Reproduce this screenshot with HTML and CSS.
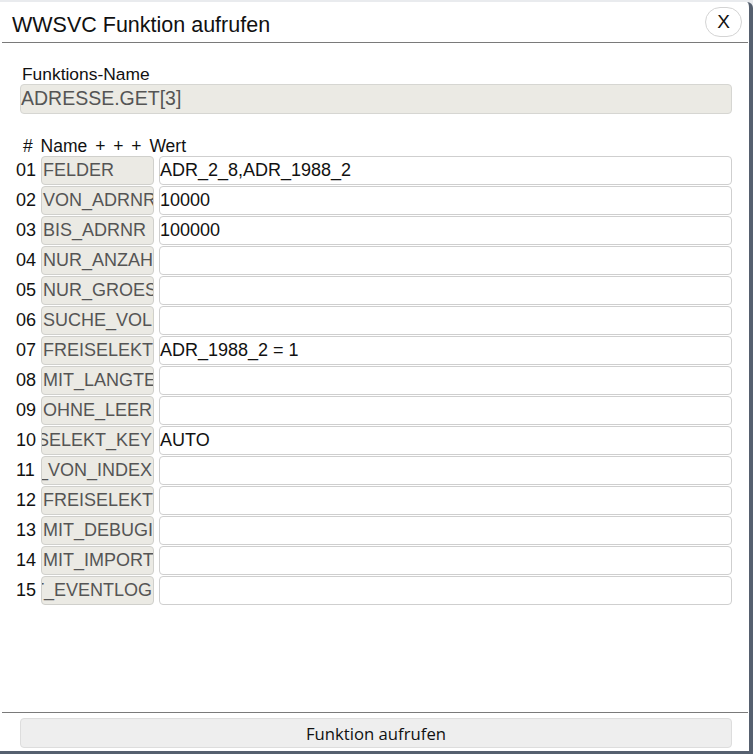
FILE: index.html
```html
<!DOCTYPE html>
<html lang="de">
<head>
<meta charset="utf-8">
<title>WWSVC Funktion aufrufen</title>
<link rel="stylesheet" href="styles.css">
</head>
<body>
<div class="backdrop">
  <div class="dialog">
    <header class="dlg-head">
      <h1 class="dlg-title">WWSVC Funktion aufrufen</h1>
      <button class="close-btn" type="button">X</button>
    </header>
    <main class="dlg-body">
      <label class="fn-label">Funktions-Name</label>
      <div class="fn-input">ADRESSE.GET[3]</div>
      <div class="params-head"># Name + + + Wert</div>
      <div class="params">
        <div class="row"><span class="num">01</span><div class="name"><span>FELDER</span></div><div class="value">ADR_2_8,ADR_1988_2</div></div>
        <div class="row"><span class="num">02</span><div class="name"><span>VON_ADRNR</span></div><div class="value">10000</div></div>
        <div class="row"><span class="num">03</span><div class="name"><span>BIS_ADRNR</span></div><div class="value">100000</div></div>
        <div class="row"><span class="num">04</span><div class="name"><span>NUR_ANZAHL</span></div><div class="value"></div></div>
        <div class="row"><span class="num">05</span><div class="name"><span>NUR_GROESSE</span></div><div class="value"></div></div>
        <div class="row"><span class="num">06</span><div class="name"><span>SUCHE_VOLL</span></div><div class="value"></div></div>
        <div class="row"><span class="num">07</span><div class="name"><span>FREISELEKT</span></div><div class="value">ADR_1988_2 = 1</div></div>
        <div class="row"><span class="num">08</span><div class="name"><span>MIT_LANGTEXT</span></div><div class="value"></div></div>
        <div class="row"><span class="num">09</span><div class="name"><span>OHNE_LEER</span></div><div class="value"></div></div>
        <div class="row"><span class="num">10</span><div class="name end"><span>SELEKT_KEY</span></div><div class="value">AUTO</div></div>
        <div class="row"><span class="num">11</span><div class="name end"><span>_VON_INDEX</span></div><div class="value"></div></div>
        <div class="row"><span class="num">12</span><div class="name"><span>FREISELEKT</span></div><div class="value"></div></div>
        <div class="row"><span class="num">13</span><div class="name"><span>MIT_DEBUGINFO</span></div><div class="value"></div></div>
        <div class="row"><span class="num">14</span><div class="name"><span>MIT_IMPORT</span></div><div class="value"></div></div>
        <div class="row"><span class="num">15</span><div class="name end"><span>T_EVENTLOG</span></div><div class="value"></div></div>
      </div>
    </main>
    <footer class="dlg-foot">
      <button class="call-btn" type="button">Funktion aufrufen</button>
    </footer>
  </div>
</div>
</body>
</html>
```

FILE: styles.css
```css
html, body {
  margin: 0;
  padding: 0;
  height: 100%;
  background: #e9ebee;
}

body {
  font-family: "Liberation Sans", Arial, sans-serif;
  color: #111;
}

.backdrop {
  padding-top: 2px;
  height: 752px;
  box-sizing: border-box;
  width: 753px;
}

.dialog {
  width: 749px;
  height: 749px;
  box-sizing: content-box;
  background: #fff;
  border-right: 4px solid #56606f;
  border-bottom: 3px solid #56606f;
  border-top-right-radius: 6px;
  display: flex;
  flex-direction: column;
}

.dlg-head {
  height: 40px;
  border-bottom: 1px solid #7a7a7a;
  margin: 0 1px 0 2px;
  display: flex;
  align-items: center;
  justify-content: space-between;
  padding: 0 6px 0 10px;
}

.dlg-title {
  margin: 0;
  font-size: 21.5px;
  font-weight: normal;
  color: #111;
  padding-top: 7px;
}

.close-btn {
  width: 37px;
  height: 30px;
  border: 1px solid #d4d4d4;
  border-radius: 15px;
  background: #fff;
  font-family: "Liberation Sans", Arial, sans-serif;
  font-size: 19px;
  color: #111;
  padding: 0;
  margin-top: 0;
}

.dlg-body {
  flex: 1;
  padding: 21px 17px 0 16px;
}

.fn-label {
  display: block;
  margin-left: 6px;
  font-size: 17.4px;
  line-height: 20px;
}

.fn-input {
  margin-left: 4px;
  height: 30px;
  box-sizing: border-box;
  background: #ebeae4;
  border: 1px solid #d6d6d2;
  border-radius: 4px;
  color: #555;
  font-size: 19.5px;
  line-height: 26px;
  padding-left: 0;
}

.params-head {
  margin-top: 23px;
  margin-left: 7px;
  font-size: 17.5px;
  line-height: 19px;
  word-spacing: 3px;
}

.params {
  display: flex;
  flex-direction: column;
  gap: 1px;
}

.row {
  display: flex;
  align-items: center;
  height: 29px;
}

.num {
  width: 25px;
  font-size: 18px;
  color: #111;
}

.name {
  width: 113px;
  height: 29px;
  box-sizing: border-box;
  background: #ebeae4;
  border: 1px solid #d0d0cc;
  border-radius: 4px;
  overflow: hidden;
  display: flex;
  align-items: center;
  white-space: nowrap;
  color: #555;
  font-size: 18px;
  padding: 0 1px;
}

.name.end {
  justify-content: flex-end;
}

.name span {
  flex: none;
}

.value {
  margin-left: 5px;
  flex: 1;
  height: 29px;
  box-sizing: border-box;
  border: 1px solid #cfcfcf;
  border-radius: 4px;
  background: #fff;
  font-size: 18px;
  line-height: 27px;
  padding-left: 0;
  color: #111;
}

.dlg-foot {
  border-top: 1px solid #7a7a7a;
  margin: 0 1px 0 2px;
  padding: 5px 16px 3px 18px;
}

.call-btn {
  width: 100%;
  height: 30px;
  background: #eeeeee;
  border: 1px solid #dddddd;
  border-radius: 4px;
  font-family: "Open Sans", sans-serif;
  font-size: 16.7px;
  color: #111;
  padding: 0;
}
```
